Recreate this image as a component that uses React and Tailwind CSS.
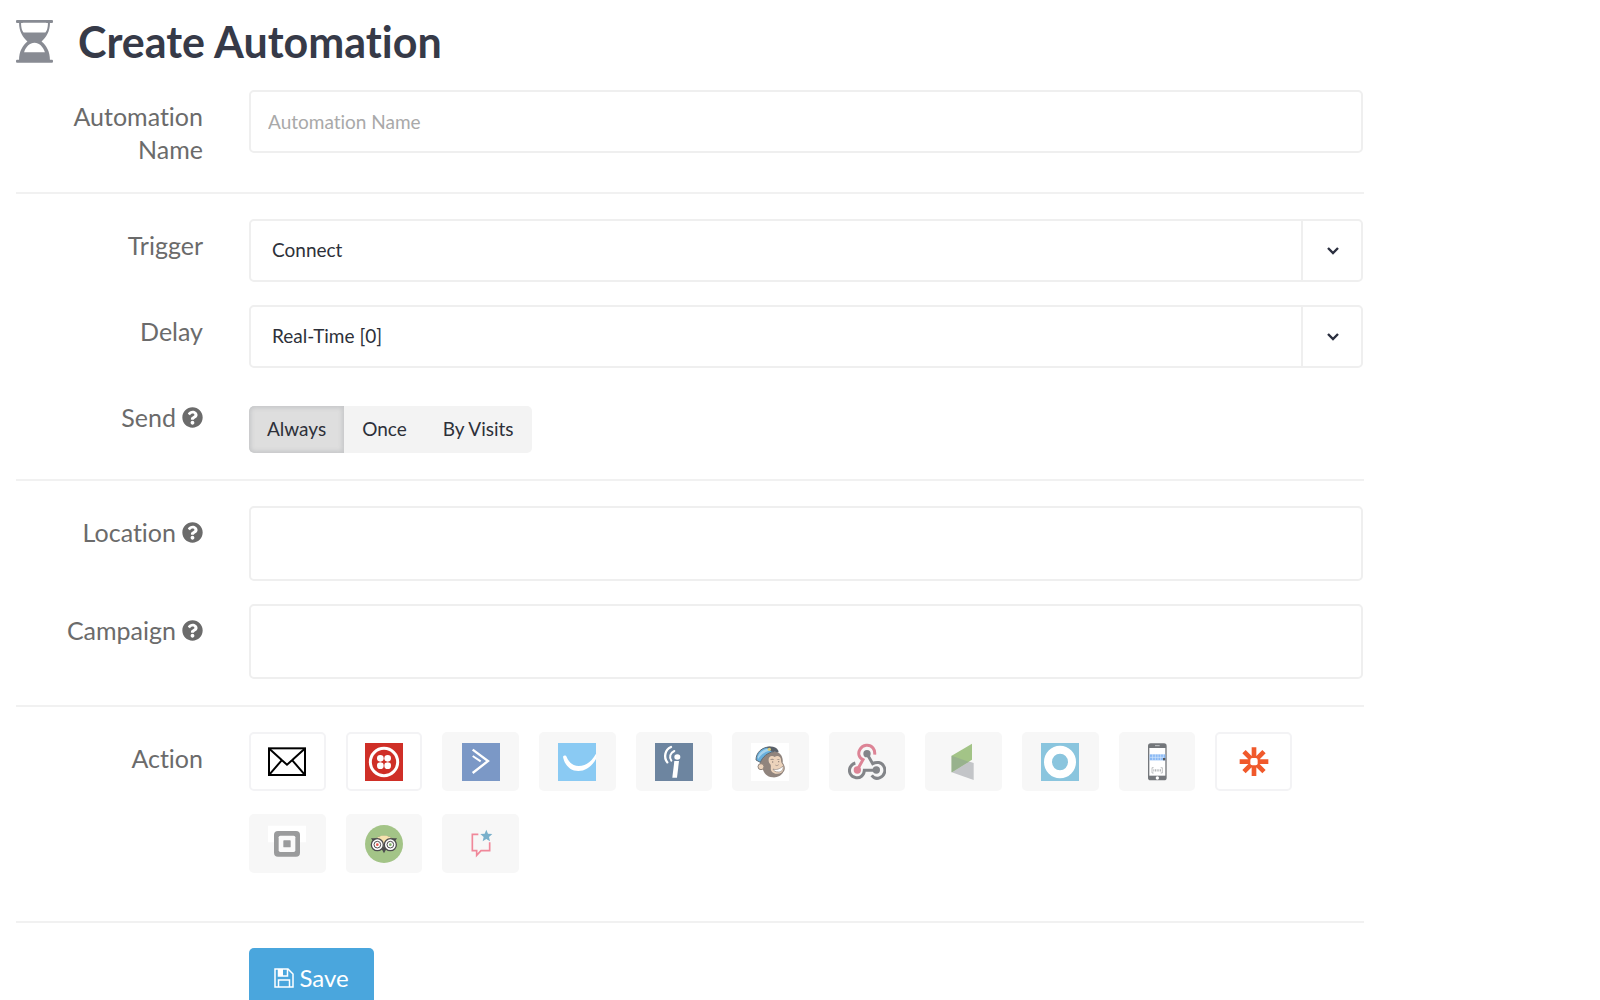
import { useState } from 'react';
import { FaQuestionCircle } from 'react-icons/fa';

const Logo = ({ children }) => (
  <svg viewBox="0 0 114 114" className="w-[38px] h-[38px]" fill="none" aria-hidden="true">
    {children}
  </svg>
);

const EmailLogo = () => (
  <Logo>
    <g stroke="#000" strokeWidth="6">
      <rect x="3" y="16" width="108" height="80" />
      <path d="M4 17l38 35 15 13 15-13 38-35M4 95l37-43M110 95L73 52" />
    </g>
  </Logo>
);

const TwilioLogo = () => (
  <Logo>
    <path fill="#cf2f27" d="M0 0h114v114H0z" />
    <circle cx="57" cy="57" r="41" stroke="#fff" strokeWidth="9" />
    <g fill="#fff">
      <circle cx="46" cy="46" r="10" />
      <circle cx="68" cy="46" r="10" />
      <circle cx="46" cy="68" r="10" />
      <circle cx="68" cy="68" r="10" />
    </g>
  </Logo>
);

const ActiveCampaignLogo = () => (
  <Logo>
    <path fill="#7b98c6" d="M0 0h114v114H0z" />
    <path stroke="#fff" strokeWidth="7" d="M32 20l46 34-46 36" />
    <path stroke="#fff" strokeWidth="6" d="M32 39l24 16" />
  </Logo>
);

const SmileLogo = () => (
  <Logo>
    <path fill="#8acaf3" d="M0 0h114v114H0z" />
    <path fill="#fff" d="M15 41c3-5 9-4 11 1 7 17 20 27 36 27 22 0 39-14 52-37v16C101 70 84 84 61 84 38 84 20 68 15 41z" />
  </Logo>
);

const InfoLogo = () => (
  <Logo>
    <path fill="#6d85a0" d="M0 0h114v114H0z" />
    <ellipse cx="67" cy="42" rx="9" ry="8" fill="#fff" />
    <path fill="#fff" d="M58 54h14l-6 50H52z" />
    <path stroke="#fff" strokeWidth="7" strokeLinecap="round" d="M48 12C30 20 25 42 37 58" />
    <path stroke="#fff" strokeWidth="6" strokeLinecap="round" d="M58 24C45 30 42 43 49 53" />
  </Logo>
);

const MailchimpLogo = () => (
  <Logo>
    <path fill="#fff" d="M0 0h114v114H0z" />
    <path fill="#90847d" d="M28 56C30 34 48 22 68 25c21 2 29 17 27 34 7 9 9 20 2 28-6 11-20 18-33 16-16-2-26-13-29-26-8-3-11-13-7-21z" />
    <path fill="#ecd3bb" d="M53 53c-2-12 9-18 18-11 8-6 18-2 19 8 0 7 2 11 6 16 4 9 2 17-5 23-9 6-25 4-30-5-4-8 1-14-3-20-3-4-5-7-5-11z" />
    <path fill="#90847d" d="M57 51c4-5 9-5 13 0-4-1-9-1-13 0zM77 51c3-4 7-4 10 0-3-1-7-1-10 0z" />
    <circle cx="65" cy="57" r="2" fill="#8a7c74" />
    <circle cx="83" cy="56" r="2" fill="#8a7c74" />
    <path fill="#fff" stroke="#90847d" strokeWidth="2" d="M66 78c9 4 21 0 30-9 2 12-5 18-14 18-8 0-14-3-16-9z" />
    <path stroke="#90847d" strokeWidth="2" d="M73 66c3 3 7 2 10-1" />
    <circle cx="30" cy="71" r="9" fill="#ecd3bb" stroke="#90847d" strokeWidth="3" />
    <path fill="#69b0dd" stroke="#5d6a75" strokeWidth="3" d="M15 51c0-23 19-40 43-39l10 14c-18 3-33 15-40 32z" />
    <path fill="#a8d3ec" d="M20 42c5-14 17-23 32-25l5 6c-16 3-29 12-35 25z" />
    <path fill="#596069" d="M47 13c13-5 30-1 35 10 2 5-1 6-6 4-6-2-9-2-14-1z" />
    <circle cx="55" cy="19" r="5" fill="#d9cb78" />
  </Logo>
);

const WebhookLogo = () => (
  <Logo>
    <g strokeWidth="9">
      <path stroke="#dd8496" d="M28 80l17-30C32 44 29 30 36 19c8-14 28-17 39-4 4 5 6 12 5 20" />
      <path stroke="#838589" d="M57 32l17 30c12-7 27-4 33 7 8 13 2 30-11 35-9 4-19 1-25-7" />
      <path stroke="#838589" d="M84 82H49c-1 16-13 24-25 22C8 102 0 86 7 72c3-6 8-10 15-12" />
    </g>
    <circle cx="57" cy="32" r="11" fill="#838589" />
    <circle cx="28" cy="81" r="11" fill="#dd8496" />
    <circle cx="85" cy="81" r="11" fill="#838589" />
  </Logo>
);

const InfusionLogo = () => (
  <Logo>
    <path fill="#c3c5c8" d="M20 38l66 22v51L20 88z" />
    <path fill="#a3c487" d="M20 38L81 2v48L20 88z" />
    <path fill="#98b28d" d="M20 38l51 18-51 32z" />
  </Logo>
);

const OntraportLogo = () => (
  <Logo>
    <path fill="#8ac5de" d="M0 0h114v114H0z" />
    <ellipse cx="57" cy="57" rx="36" ry="37" stroke="#fff" strokeWidth="24" />
  </Logo>
);

const PhoneLogo = () => (
  <Logo>
    <rect x="30" y="1" width="56" height="111" rx="8" fill="#74777b" />
    <path fill="#fff" d="M34 15h48v83H34z" />
    <path stroke="#c3c5c8" strokeWidth="3" d="M51 8h14" />
    <circle cx="58" cy="105" r="5" fill="#fff" />
    <path stroke="#8ab9f5" strokeWidth="18" d="M35 43h47" />
    <path stroke="#d8e8fc" strokeWidth="2" d="M44 33v20M52 33v20M60 33v20M68 33v20M76 33v20M36 43h40" />
    <path fill="#55585c" d="M75 45h7v7h-7z" />
    <path stroke="#a2a4a6" strokeWidth="2" d="M42 74v16M42 74h5M42 90h5M73 74v16M73 74h-5M73 90h-5" />
    <path stroke="#b4b6b8" strokeWidth="7" strokeDasharray="3 2" d="M46 82h24" />
  </Logo>
);

const ZapierLogo = () => (
  <Logo>
    <g stroke="#f0592b" strokeWidth="14">
      <path d="M57 13v86M14 56h86M27 26l60 60M87 26L27 86" />
    </g>
    <rect x="46" y="45" width="22" height="22" rx="6" fill="#fff" />
  </Logo>
);

const SquareLogo = () => (
  <Logo>
    <path fill="#fff" d="M0 2h114v50H0z" />
    <rect x="18" y="18" width="78" height="77" rx="12" fill="#9a9b9c" />
    <rect x="32" y="32" width="50" height="49" rx="5" fill="#fafafa" />
    <rect x="46" y="46" width="22" height="21" rx="2" fill="#9a9b9c" />
  </Logo>
);

const OwlLogo = () => (
  <Logo>
    <circle cx="57" cy="57" r="57" fill="#a3c487" />
    <path fill="#4c4c4e" d="M18 40h15c13-10 35-10 48 0h15l-6 9-14-5c-10-8-29-8-38 0l-14 5zM50 72l7 13 7-13-7-8z" />
    <path fill="#f6e2ae" d="M34 40c12-11 34-11 46 0L57 64z" />
    <g fill="#fff" stroke="#4c4c4e" strokeWidth="4">
      <circle cx="37" cy="59" r="18" />
      <circle cx="76" cy="59" r="18" />
    </g>
    <g stroke="#4c4c4e" strokeWidth="3">
      <circle cx="37" cy="59" r="10" />
      <circle cx="76" cy="59" r="10" />
    </g>
    <circle cx="37" cy="59" r="4" fill="#e8564c" />
    <circle cx="76" cy="59" r="4" fill="#7db562" />
  </Logo>
);

const ReviewLogo = () => (
  <Logo>
    <path stroke="#f0889a" strokeWidth="5" d="M49 28H31v49h13v14l13-14h26V52" />
    <path fill="#79b0cb" d="M73 14l5 12 13 1-10 9 3 13-11-7-11 7 3-13-10-9 13-1z" />
  </Logo>
);

const actions = [
  { name: 'Email', icon: EmailLogo, enabled: true },
  { name: 'Twilio', icon: TwilioLogo, enabled: true },
  { name: 'ActiveCampaign', icon: ActiveCampaignLogo },
  { name: 'Campaigner', icon: SmileLogo },
  { name: 'iContact', icon: InfoLogo },
  { name: 'MailChimp', icon: MailchimpLogo },
  { name: 'Webhook', icon: WebhookLogo },
  { name: 'Infusionsoft', icon: InfusionLogo },
  { name: 'Ontraport', icon: OntraportLogo },
  { name: 'Mobile coupon', icon: PhoneLogo },
  { name: 'Zapier', icon: ZapierLogo, enabled: true },
  { name: 'Square', icon: SquareLogo },
  { name: 'TripAdvisor', icon: OwlLogo },
  { name: 'Reviews', icon: ReviewLogo },
];

const Row = ({ label, htmlFor, help, children }) => (
  <div className="grid grid-cols-[187px_minmax(0,1fr)] gap-x-[46px] pr-px">
    <label
      htmlFor={htmlFor}
      className="pt-[10px] text-right text-[25px] leading-[33px] text-[#6b6b6b]"
    >
      {label}
      {help && <FaQuestionCircle className="inline w-[21px] h-[21px] ml-[6px] -mt-[6px]" />}
    </label>
    <div className="min-w-0">{children}</div>
  </div>
);

const Divider = () => <hr className="h-[2px] border-0 bg-[#f1f1f1] mt-[26px] mb-[25px]" />;

const Select = ({ id, options }) => (
  <div className="relative">
    <select
      id={id}
      className="block w-full h-[63px] appearance-none rounded-[5px] border-2 border-[#efefef] bg-white pl-[21px] pr-16 text-[19px] text-[#2d3039]"
    >
      {options.map((option) => (
        <option key={option}>{option}</option>
      ))}
    </select>
    <span className="pointer-events-none absolute inset-y-0 right-0 w-[62px] border-l-2 border-[#efefef] flex items-center justify-center">
      <svg viewBox="0 0 12 8" className="w-3 h-2" fill="none" stroke="#2b2f3f" strokeWidth="2.4">
        <path d="M1 1l5 5 5-5" />
      </svg>
    </span>
  </div>
);

const App = () => {
  const [name, setName] = useState('');
  const [send, setSend] = useState('Always');

  return (
    <main className="min-h-screen bg-white pl-4 pr-[236px] font-[Lato,sans-serif] [font-variant-ligatures:none]">
      <header className="flex h-[90px] items-start gap-[25px] pt-5">
        <svg viewBox="0 0 110 128" className="w-[37px] h-[43px]" fill="#888b93" aria-hidden="true">
          <rect width="110" height="9" rx="3" />
          <rect y="118" width="110" height="9" rx="3" />
          <path d="M9 8h6c0 19 5 27 8 29h64c3-2 8-10 8-29h6c0 27-11 42-25 56 14 12 25 28 25 56H9c0-28 11-44 25-56C20 50 9 35 9 8z" />
          <path fill="#fff" d="M20 8h70c0 12-2 20-6 28H26C22 28 20 20 20 8zM24 96c6-17 17-28 31-28s25 11 31 28z" />
        </svg>
        <h1 className="text-[43px] leading-[44px] font-bold text-[#363a48]">Create Automation</h1>
      </header>

      <form onSubmit={(e) => e.preventDefault()}>
        <Row label="Automation Name" htmlFor="name">
          <input
            id="name"
            type="text"
            placeholder="Automation Name"
            value={name}
            onChange={(e) => setName(e.target.value)}
            className="block w-full h-[63px] rounded-[5px] border-2 border-[#efefef] px-[17px] text-[19px] placeholder:text-[#a9a9a9]"
          />
        </Row>

        <Divider />

        <div className="flex flex-col gap-[23px]">
          <Row label="Trigger" htmlFor="trigger">
            <Select id="trigger" options={['Connect', 'Disconnect']} />
          </Row>
          <Row label="Delay" htmlFor="delay">
            <Select id="delay" options={['Real-Time [0]', '1 Hour [1]']} />
          </Row>
          <Row label="Send" help>
            <div className="pt-[15px]">
              <div className="inline-flex h-[47px] align-top overflow-hidden rounded-[5px] bg-[#f3f3f3]">
                {['Always', 'Once', 'By Visits'].map((option) => (
                  <button
                    key={option}
                    type="button"
                    onClick={() => setSend(option)}
                    className={`px-[18px] text-[19px] text-[#2d3039] ${
                      send === option
                        ? 'rounded-l-[5px] bg-[#dedede] shadow-[inset_0_0_4px_2px_#c6c7c9]'
                        : ''
                    }`}
                  >
                    {option}
                  </button>
                ))}
              </div>
            </div>
          </Row>
        </div>

        <Divider />

        <div className="flex flex-col gap-[23px]">
          <Row label="Location" htmlFor="location" help>
            <input
              id="location"
              type="text"
              className="block w-full h-[75px] rounded-[5px] border-2 border-[#efefef] px-[17px] text-[19px]"
            />
          </Row>
          <Row label="Campaign" htmlFor="campaign" help>
            <input
              id="campaign"
              type="text"
              className="block w-full h-[75px] rounded-[5px] border-2 border-[#efefef] px-[17px] text-[19px]"
            />
          </Row>
        </div>

        <Divider />

        <Row label="Action">
          <div className="grid max-w-[1043px] grid-cols-11 gap-x-5 gap-y-[23px] pb-[22px]">
            {actions.map(({ name, icon: Icon, enabled }) => (
              <button
                key={name}
                type="button"
                aria-label={name}
                className={`flex h-[59px] items-center justify-center rounded-[5px] ${
                  enabled ? 'border-2 border-[#f3f3f5] bg-white' : 'bg-[#f7f7f7]'
                }`}
              >
                <Icon />
              </button>
            ))}
          </div>
        </Row>

        <Divider />

        <div className="pl-[233px]">
          <button
            type="submit"
            className="flex h-[60px] w-[125px] items-center justify-center gap-[5px] rounded-[5px] bg-[#4aa6dd] text-[24px] text-white"
          >
            <svg viewBox="0 0 20 20" className="w-5 h-5" fill="none" stroke="currentColor" strokeWidth="1.5" aria-hidden="true">
              <path d="M1 1h13l5 5v13H1z" />
              <path d="M4.500 1v7h9V1M4.500 19v-7h11v7" />
              <path fill="currentColor" stroke="none" d="M5 1h4v7H5z" />
            </svg>
            Save
          </button>
        </div>
      </form>
    </main>
  );
};

export default App;
